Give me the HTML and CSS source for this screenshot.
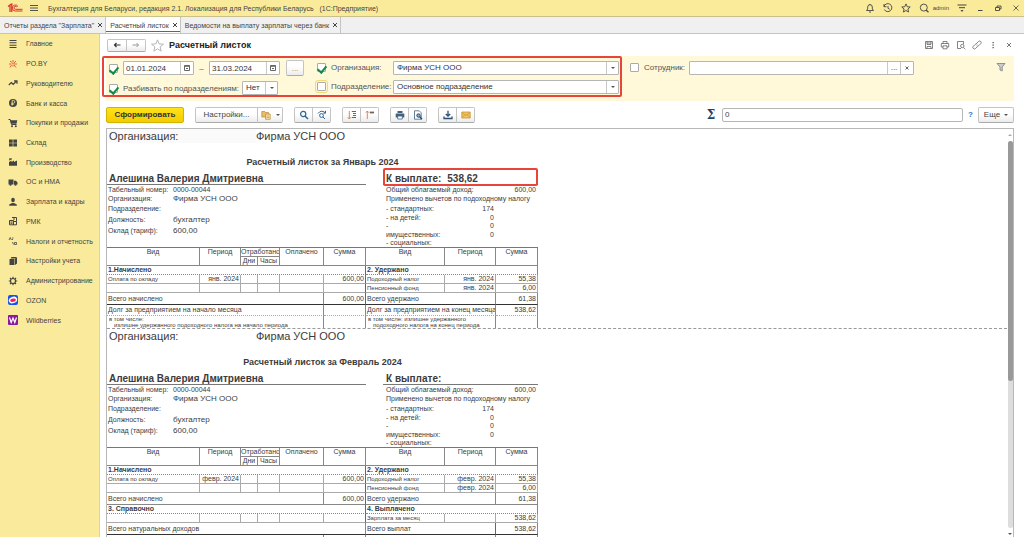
FILE: index.html
```html
<!DOCTYPE html>
<html lang="ru">
<head>
<meta charset="utf-8">
<title>Расчетный листок</title>
<link rel="stylesheet" href="styles.css">
</head>
<body>
<header class="topbar">
  <svg class="logo" viewBox="0 0 16 10" aria-label="1С"><path d="M1 3.500 3 2v7M3.500 1.300 4.800 1v8" fill="none" stroke="#d8352a" stroke-width="1.300"/><path d="M11 3.600A3 3 0 1 0 8.600 8H15.500M9.800 4A1.500 1.500 0 1 0 8.600 6.300H15.500" fill="none" stroke="#d8352a" stroke-width="1"/></svg>
  <button class="plain" aria-label="Меню"><svg class="ic" viewBox="0 0 10 10"><path d="M1 2.500h8M1 5h8M1 7.500h8" stroke="#555" fill="none"/></svg></button>
  <span class="app-title">Бухгалтерия для Беларуси, редакция 2.1. Локализация для Республики Беларусь &nbsp; (1С:Предприятие)</span>
  <div class="top-tools">
    <button class="plain" aria-label="Уведомления"><svg class="ic" viewBox="0 0 10 10"><path d="M1.500 7.500h7L7.300 6V4A2.300 2.300 0 0 0 2.700 4v2zM4 9h2M5 1v1" stroke="#444" fill="none" stroke-width=".9"/></svg></button>
    <button class="plain" aria-label="История"><svg class="ic" viewBox="0 0 10 10"><path d="M1 3.500A4 4 0 1 1 1.300 6.500M1 1v2.700h2.500M5 3v2.300l1.700 1" stroke="#444" fill="none" stroke-width=".9"/></svg></button>
    <button class="plain" aria-label="Избранное"><svg class="ic" viewBox="0 0 10 10"><path d="M5 .9 6.200 3.700l3 .3-2.300 2 .7 3L5 7.500 2.400 9l.7-3L.8 4l3-.3z" stroke="#444" fill="none" stroke-width=".9"/></svg></button>
    <button class="plain" aria-label="Поиск"><svg class="ic" viewBox="0 0 10 10"><circle cx="4.800" cy="4.600" r="3.500" stroke="#444" fill="none" stroke-width=".9"/><path d="M7 7l2.500 2.300" stroke="#444" stroke-width="1.200"/></svg></button>
    <span class="user">admin</span>
    <button class="plain" aria-label="Сервис"><svg class="ic" viewBox="0 0 10 10"><path d="M.5 2h9M2 4.700h6" stroke="#444"/><path d="M3.500 7h3L5 9z" fill="#444"/></svg></button>
    <button class="plain win" aria-label="Свернуть"><svg class="ic" viewBox="0 0 10 10"><path d="M3 7.500h4.500" stroke="#444"/></svg></button>
    <button class="plain win" aria-label="Восстановить"><svg class="ic" viewBox="0 0 10 10"><path d="M2.500 4.500h4v3h-4zM4 4.500V3h4v3H6.500" stroke="#444" fill="none" stroke-width=".9"/></svg></button>
    <button class="plain win" aria-label="Закрыть"><svg class="ic" viewBox="0 0 10 10"><path d="M2.500 2.500l5 5M7.500 2.500l-5 5" stroke="#444" stroke-width=".8"/></svg></button>
  </div>
</header>

<nav class="tabs">
  <div class="tab"><span>Отчеты раздела "Зарплата"</span><button class="plain close" aria-label="Закрыть"><svg viewBox="0 0 6 6"><path d="M1 1l4 4M5 1L1 5" stroke="#444"/></svg></button></div>
  <div class="tab active"><span>Расчетный листок</span><button class="plain close" aria-label="Закрыть"><svg viewBox="0 0 6 6"><path d="M1 1l4 4M5 1L1 5" stroke="#444"/></svg></button></div>
  <div class="tab"><span>Ведомости на выплату зарплаты через банк</span><button class="plain close" aria-label="Закрыть"><svg viewBox="0 0 6 6"><path d="M1 1l4 4M5 1L1 5" stroke="#444"/></svg></button></div>
</nav>

<div class="workspace">
  <aside class="sidebar">
    <a href="#"><svg class="ic" viewBox="0 0 10 10"><path d="M1.500 1.500h7M1.500 3.800h7M1.500 6.200h7M1.500 8.500h7" stroke="#444" stroke-width="1.100"/></svg>Главное</a>
    <a href="#"><svg class="ic" viewBox="0 0 10 10"><path d="M5 1v2.500M1 5h2.500M6 5h3M2 2l2 1.500M8 2L6 4M3.500 6L2 8.500M6 6l2 2.500M5 6v1.500" stroke="#e0502e" stroke-width=".9"/><circle cx="5" cy="4.800" r=".8" fill="#e0502e"/></svg>PO.BY</a>
    <a href="#"><svg class="ic" viewBox="0 0 10 10"><path d="M.8 7l2.500-2.500L5.200 6.300 8.500 3M6 2.800h3v3" stroke="#444" fill="none" stroke-width="1.200"/></svg>Руководителю</a>
    <a href="#"><svg class="ic" viewBox="0 0 10 10"><circle cx="5" cy="5" r="4" fill="#444"/><path d="M4.200 7.500v-5h1.300a1.300 1.300 0 0 1 0 2.700H3.200M3.200 6.400h2.500" stroke="#f9eb9b" fill="none" stroke-width=".8"/></svg>Банк и касса</a>
    <a href="#"><svg class="ic" viewBox="0 0 10 10"><path d="M.5 1.500h1.700l1.300 5h5" stroke="#444" fill="none"/><path d="M2.300 2.300h7L8.500 5.700H3.200z" fill="#444"/><circle cx="4" cy="8.300" r="1" fill="#444"/><circle cx="7.800" cy="8.300" r="1" fill="#444"/></svg>Покупки и продажи</a>
    <a href="#"><svg class="ic" viewBox="0 0 10 10"><path d="M1 1.500h3.700v3.200H1zM5.300 1.500H9v3.200H5.300zM1 5.300h3.700v3.200H1zM5.300 5.300H9v3.200H5.300z" fill="#444"/></svg>Склад</a>
    <a href="#"><svg class="ic" viewBox="0 0 10 10"><path d="M1 8.800V5l2.500-1.500V5L6 3.500V5l3-1.500v5.300zM1 1.500h3v1H1z" fill="#444"/><path d="M1 3.200l2.200-1.500" stroke="#444"/></svg>Производство</a>
    <a href="#"><svg class="ic" viewBox="0 0 10 10"><path d="M.5 2.500h5v5h-5zM6 3.800h2l1.500 1.700v2H6z" fill="#444"/><circle cx="2.500" cy="7.700" r="1.100" fill="#444"/><circle cx="7.500" cy="7.700" r="1.100" fill="#444"/></svg>ОС и НМА</a>
    <a href="#"><svg class="ic" viewBox="0 0 10 10"><ellipse cx="5" cy="3" rx="1.800" ry="2.200" fill="#444"/><path d="M1.200 8.800V7.500L4 6h2l2.800 1.500v1.300z" fill="#444"/></svg>Зарплата и кадры</a>
    <a href="#"><svg class="ic" viewBox="0 0 10 10"><path d="M4 1.500h4.500v4M1.500 4.500h4v4.300h-4zM5.500 5.500h3v3.300h-3z" fill="none" stroke="#444"/><path d="M5 3h2M2.500 6h2M2.500 7.300h2" stroke="#444"/></svg>РМК</a>
    <a href="#"><svg class="ic" viewBox="0 0 10 10"><path d="M1 4l1.200-2.500L3.400 4M4 2h1.500M4 3.500h1M4.500 6l1 2.500M6.500 6.500h2v2h-2z" stroke="#444" fill="none" stroke-width=".8"/></svg>Налоги и отчетность</a>
    <a href="#"><svg class="ic" viewBox="0 0 10 10"><path d="M1.500 3h5v6h-5zM2.500 2.500L3.500 1H9L7.500 2.500zM7 3l2-1.500v6L7 9z" fill="#444"/></svg>Настройки учета</a>
    <a href="#"><svg class="ic" viewBox="0 0 10 10"><circle cx="5" cy="5" r="2.500" fill="none" stroke="#444" stroke-width="1.200"/><path d="M5 .8v1.500M5 7.700v1.500M.8 5h1.500M7.700 5h1.500M2 2l1 1M7 7l1 1M8 2L7 3M3 7L2 8" stroke="#444" stroke-width="1.200"/></svg>Администрирование</a>
    <a href="#"><svg class="ic" viewBox="0 0 10 10"><rect width="10" height="10" rx="2" fill="#1552f0"/><ellipse cx="5" cy="5" rx="4.300" ry="3.300" fill="#fff" transform="rotate(-20 5 5)"/><ellipse cx="5" cy="5.200" rx="2.900" ry="1.700" fill="#f0245a" transform="rotate(-10 5 5)"/></svg>OZON</a>
    <a href="#"><svg class="ic" viewBox="0 0 10 10"><rect width="10" height="10" rx="1" fill="#8a1a9c"/><path d="M1.500 2.500l1.700 5L5 3l1.800 4.500 1.700-5" stroke="#fff" fill="none" stroke-width="1.200"/></svg>Wildberries</a>
  </aside>

  <main class="page">
    <div class="page-head">
      <div class="btn-group nav-group">
        <button class="btn" aria-label="Назад"><svg class="ic" viewBox="0 0 10 10"><path d="M8.500 5h-6M4.500 3L2.500 5l2 2" stroke="#333" fill="none" stroke-width="1.200"/></svg></button>
        <button class="btn" aria-label="Вперед"><svg class="ic" viewBox="0 0 10 10"><path d="M1.500 5h6M5.500 3l2 2-2 2" stroke="#999" fill="none"/></svg></button>
      </div>
      <button class="plain" aria-label="В избранное"><svg class="star" viewBox="0 0 12 12"><path d="M6 .8 7.500 4.500l4 .3-3.100 2.500 1 3.900L6 9.100l-3.400 2.100 1-3.900L.5 4.800l4-.3z" fill="none" stroke="#aaa" stroke-width=".8"/></svg></button>
      <h1>Расчетный листок</h1>
      <div class="head-tools">
        <button class="plain" aria-label="Сохранить"><svg class="ic" viewBox="0 0 10 10"><path d="M1.500 1.500h7v7h-7zM3 1.500v3h4v-3M3 8.500v-2h4v2M3 3h4" fill="none" stroke="#666" stroke-width=".8"/></svg></button>
        <button class="plain" aria-label="Печать"><svg class="ic" viewBox="0 0 10 10"><path d="M3 3.500v-2h4v2M3 7H1.300V3.500h7.400V7H7M3 5.800h4v3H3z" fill="none" stroke="#666" stroke-width=".8"/></svg></button>
        <button class="plain" aria-label="Просмотр"><svg class="ic" viewBox="0 0 10 10"><path d="M5 8.500H1.500v-7h6V4M7.500 7.500l1.800 1.700" fill="none" stroke="#666" stroke-width=".8"/><circle cx="6.300" cy="6" r="1.700" fill="none" stroke="#666" stroke-width=".8"/></svg></button>
        <button class="plain" aria-label="Ссылка"><svg class="ic" viewBox="0 0 10 10"><path d="M4.500 3.500l2-2a1.500 1.500 0 0 1 2.200 2.200l-2 2a1.300 1.300 0 0 1-2 0M5.500 6.500l-2 2a1.500 1.500 0 0 1-2.200-2.200l2-2a1.300 1.300 0 0 1 2 0" fill="none" stroke="#666" stroke-width=".8"/></svg></button>
        <button class="plain" aria-label="Еще"><svg class="ic" viewBox="0 0 10 10"><path d="M4.500 2h1.300v1.300H4.500zM4.500 4.500h1.300v1.300H4.500zM4.500 7h1.300v1.300H4.500z" fill="#555"/></svg></button>
        <button class="plain" aria-label="Закрыть"><svg class="ic" viewBox="0 0 10 10"><path d="M3 3l4 4M7 3L3 7" stroke="#666" stroke-width=".9"/></svg></button>
      </div>
    </div>

    <form class="filter">
      <div class="filter-left">
        <div class="frow">
          <input type="checkbox" class="cb" id="period" aria-label="Период" checked>
          <div class="field date"><input type="text" value="01.01.2024" aria-label="Начало периода"><button type="button" aria-label="Календарь"><svg viewBox="0 0 8 8"><path d="M1.500 1.500h5v5h-5z" fill="none" stroke="#666"/><path d="M1 2.300h6M3 4.500h2" stroke="#666"/></svg></button></div>
          <span class="dash">–</span>
          <div class="field date"><input type="text" value="31.03.2024" aria-label="Конец периода"><button type="button" aria-label="Календарь"><svg viewBox="0 0 8 8"><path d="M1.500 1.500h5v5h-5z" fill="none" stroke="#666"/><path d="M1 2.300h6M3 4.500h2" stroke="#666"/></svg></button></div>
          <button type="button" class="btn dots">...</button>
        </div>
        <div class="frow">
          <input type="checkbox" class="cb" id="split" aria-label="Использовать разбивку" checked>
          <label for="split-by">Разбивать по подразделениям:</label>
          <div class="pick short"><select id="split-by"><option>Нет</option></select></div>
        </div>
      </div>
      <div class="filter-mid">
        <div class="frow">
          <input type="checkbox" class="cb" aria-label="Отбор по организации" checked>
          <label for="org">Организация:</label>
          <div class="pick"><select id="org"><option>Фирма УСН ООО</option></select></div>
        </div>
        <div class="frow">
          <input type="checkbox" class="cb focus" aria-label="Отбор по подразделению">
          <label for="dep">Подразделение:</label>
          <div class="pick"><select id="dep"><option>Основное подразделение</option></select></div>
        </div>
      </div>
      <div class="filter-right">
        <div class="frow">
          <input type="checkbox" class="cb" aria-label="Отбор по сотруднику">
          <label for="emp">Сотрудник:</label>
          <div class="field emp"><input type="text" id="emp"><button type="button">...</button><button type="button" aria-label="Очистить"><svg viewBox="0 0 8 8"><path d="M2.500 2.500l3 3M5.500 2.500l-3 3" stroke="#666"/></svg></button></div>
        </div>
      </div>
      <button type="button" class="plain funnel" aria-label="Отборы"><svg class="ic" viewBox="0 0 10 10"><path d="M1 1.500h8L6.200 5v4L4 8V5z" fill="#ccc" stroke="#888" stroke-width=".9"/></svg></button>
      <div class="mark mark-filter"></div>
    </form>

    <div class="toolbar">
      <button class="btn primary">Сформировать</button>
      <div class="btn-group">
        <button class="btn settings">Настройки...</button>
        <button class="btn variant" aria-label="Варианты"><svg class="ic" viewBox="0 0 10 10"><path d="M.8 1.500h3l.7 1h3V7H.8z" fill="#e9bd6a" stroke="#b98a35" stroke-width=".7"/><path d="M4.500 4h4.700v5.300H4.500z" fill="#f8e3b0" stroke="#b98a35" stroke-width=".7"/><path d="M5.500 6h2.700M5.500 7.500h2.700" stroke="#b98a35" stroke-width=".6"/></svg><i class="caret"></i></button>
      </div>
      <div class="btn-group">
        <button class="btn" aria-label="Найти"><svg class="ic" viewBox="0 0 10 10"><circle cx="4.200" cy="4" r="2.600" fill="none" stroke="#2f6695" stroke-width="1.200"/><path d="M6 6l3 3" stroke="#2f6695" stroke-width="1.500"/></svg></button>
        <button class="btn" aria-label="Найти далее"><svg class="ic" viewBox="0 0 10 10"><circle cx="4.500" cy="5.500" r="1.900" fill="none" stroke="#2f6695"/><path d="M6 7l2 2M1 3.500Q4-.5 8 2.500M8.500.8v2.400H6.300" fill="none" stroke="#2f6695"/></svg></button>
      </div>
      <div class="btn-group">
        <button class="btn" aria-label="Развернуть"><svg class="ic" viewBox="0 0 10 10"><path d="M2.300 1v8M.8 7.300L2.300 9l1.500-1.700" fill="none" stroke="#e07848" stroke-width=".9"/><path d="M4.800 1.500H9M6 3.500h3M6 5.500h3M4.800 7.500H9" stroke="#666"/></svg></button>
        <button class="btn" aria-label="Свернуть"><svg class="ic" viewBox="0 0 10 10"><path d="M2.300 9V1M.8 2.700L2.300 1l1.500 1.700" fill="none" stroke="#e07848" stroke-width=".9"/><path d="M4.800 2.500H9" stroke="#666" stroke-width="1.800"/></svg></button>
      </div>
      <div class="btn-group">
        <button class="btn" aria-label="Печать"><svg class="ic" viewBox="0 0 10 10"><path d="M2.500 1h5v2h-5zM.7 3.500h8.600v4H.7z" fill="#45617c"/><path d="M2.700 6h4.600v3H2.700z" fill="#fff" stroke="#45617c" stroke-width=".8"/></svg></button>
        <button class="btn" aria-label="Предварительный просмотр"><svg class="ic" viewBox="0 0 10 10"><path d="M1.500.8h4.700l2 2v6.400H1.500z" fill="#fff" stroke="#45617c" stroke-width=".8"/><circle cx="5.500" cy="5.500" r="1.700" fill="#8db2d2" stroke="#234a70"/><path d="M6.700 6.700l2.300 2.500" stroke="#234a70" stroke-width="1.300"/></svg></button>
      </div>
      <div class="btn-group">
        <button class="btn" aria-label="Сохранить"><svg class="ic" viewBox="0 0 10 10"><path d="M5 .8v5M2.800 4L5 6.200 7.200 4M1 6.500v2h8v-2" fill="none" stroke="#2c4f73" stroke-width="1.300"/></svg></button>
        <button class="btn" aria-label="Отправить"><svg class="ic" viewBox="0 0 10 10"><path d="M.8 2h8.400v6H.8z" fill="#f2c35c" stroke="#c8953a" stroke-width=".8"/><path d="M1 2.500l4 3 4-3M1 7.500l2.800-2.800M9 7.500L6.200 4.700" fill="none" stroke="#c8953a" stroke-width=".7"/></svg></button>
      </div>
      <label class="sigma" for="sum">Σ</label>
      <input type="text" class="sum" id="sum" value="0">
      <a href="#" class="help">?</a>
      <button class="btn more">Еще<i class="caret"></i></button>
    </div>

    <div class="sheet">
      <div class="doc">
        <section class="slip">
          <div class="org"><span class="org-label">Организация:</span><span>Фирма УСН ООО</span></div>
          <h2>Расчетный листок за Январь 2024</h2>
          <div class="info">
            <div class="person">
              <h3>Алешина Валерия Дмитриевна</h3>
              <dl>
                <dt>Табельный номер:</dt><dd class="code">0000-00044</dd>
                <dt>Организация:</dt><dd>Фирма УСН ООО</dd>
                <dt>Подразделение:</dt><dd></dd>
                <dt>Должность:</dt><dd>бухгалтер</dd>
                <dt>Оклад (тариф):</dt><dd>600,00</dd>
              </dl>
            </div>
            <div class="payout">
              <h3><span>К выплате:</span><span>538,62</span></h3>
              <div class="mark mark-pay"></div>
              <div class="pl wide"><span>Общий облагаемый доход:</span><span>600,00</span></div>
              <div class="pl">Применено вычетов по подоходному налогу</div>
              <div class="pl first"><span>- стандартных:</span><span>174</span></div>
              <div class="pl"><span>- на детей:</span><span>0</span></div>
              <div class="pl tight"><span>-</span><span>0</span></div>
              <div class="pl"><span>имущественных:</span><span>0</span></div>
              <div class="pl tight"><span>- социальных:</span></div>
            </div>
          </div>
          <table>
            <colgroup><col class="c-name"><col class="c-per"><col class="c-day"><col class="c-hr"><col class="c-paid"><col class="c-sum"><col class="c-name2"><col class="c-per2"><col class="c-sum"></colgroup>
            <thead>
              <tr><th rowspan="2">Вид</th><th rowspan="2">Период</th><th colspan="2">Отработано</th><th rowspan="2">Оплачено</th><th rowspan="2">Сумма</th><th rowspan="2">Вид</th><th rowspan="2">Период</th><th rowspan="2">Сумма</th></tr>
              <tr><th>Дни</th><th>Часы</th></tr>
            </thead>
            <tbody>
              <tr class="sec"><td colspan="6">1.Начислено</td><td colspan="3">2. Удержано</td></tr>
              <tr class="row"><td class="s">Оплата по окладу</td><td class="n">янв. 2024</td><td></td><td></td><td></td><td class="n">600,00</td><td class="s">Подоходный налог</td><td class="n">янв. 2024</td><td class="n">55,38</td></tr>
              <tr class="row"><td></td><td></td><td></td><td></td><td></td><td></td><td class="s">Пенсионный фонд</td><td class="n">янв. 2024</td><td class="n">6,00</td></tr>
              <tr class="total thick"><td colspan="5">Всего начислено</td><td class="n">600,00</td><td colspan="2">Всего удержано</td><td class="n">61,38</td></tr>
              <tr class="debt"><td colspan="5">Долг за предприятием на начало месяца</td><td></td><td colspan="2">Долг за предприятием на конец месяца</td><td class="n">538,62</td></tr>
              <tr class="note"><td colspan="5">в том числе:<br>&nbsp;&nbsp; излишне удержанного подоходного налога на начало периода</td><td></td><td colspan="2">в том числе: излишне удержанного<br>&nbsp;&nbsp; подоходного налога на конец периода</td><td></td></tr>
            </tbody>
          </table>
        </section>
        <section class="slip last">
          <div class="org"><span class="org-label clear">Организация:</span><span>Фирма УСН ООО</span></div>
          <h2>Расчетный листок за Февраль 2024</h2>
          <div class="info">
            <div class="person">
              <h3>Алешина Валерия Дмитриевна</h3>
              <dl>
                <dt>Табельный номер:</dt><dd class="code">0000-00044</dd>
                <dt>Организация:</dt><dd>Фирма УСН ООО</dd>
                <dt>Подразделение:</dt><dd></dd>
                <dt>Должность:</dt><dd>бухгалтер</dd>
                <dt>Оклад (тариф):</dt><dd>600,00</dd>
              </dl>
            </div>
            <div class="payout">
              <h3><span>К выплате:</span></h3>
              <div class="pl wide"><span>Общий облагаемый доход:</span><span>600,00</span></div>
              <div class="pl">Применено вычетов по подоходному налогу</div>
              <div class="pl first"><span>- стандартных:</span><span>174</span></div>
              <div class="pl"><span>- на детей:</span><span>0</span></div>
              <div class="pl tight"><span>-</span><span>0</span></div>
              <div class="pl"><span>имущественных:</span><span>0</span></div>
              <div class="pl tight"><span>- социальных:</span></div>
            </div>
          </div>
          <table>
            <colgroup><col class="c-name"><col class="c-per"><col class="c-day"><col class="c-hr"><col class="c-paid"><col class="c-sum"><col class="c-name2"><col class="c-per2"><col class="c-sum"></colgroup>
            <thead>
              <tr><th rowspan="2">Вид</th><th rowspan="2">Период</th><th colspan="2">Отработано</th><th rowspan="2">Оплачено</th><th rowspan="2">Сумма</th><th rowspan="2">Вид</th><th rowspan="2">Период</th><th rowspan="2">Сумма</th></tr>
              <tr><th>Дни</th><th>Часы</th></tr>
            </thead>
            <tbody>
              <tr class="sec"><td colspan="6">1.Начислено</td><td colspan="3">2. Удержано</td></tr>
              <tr class="row"><td class="s">Оплата по окладу</td><td class="n">февр. 2024</td><td></td><td></td><td></td><td class="n">600,00</td><td class="s">Подоходный налог</td><td class="n">февр. 2024</td><td class="n">55,38</td></tr>
              <tr class="row"><td></td><td></td><td></td><td></td><td></td><td></td><td class="s">Пенсионный фонд</td><td class="n">февр. 2024</td><td class="n">6,00</td></tr>
              <tr class="total"><td colspan="5">Всего начислено</td><td class="n">600,00</td><td colspan="2">Всего удержано</td><td class="n">61,38</td></tr>
              <tr class="sec"><td colspan="6">3. Справочно</td><td colspan="3">4. Выплачено</td></tr>
              <tr class="row"><td></td><td></td><td></td><td></td><td></td><td></td><td class="s">Зарплата за месяц</td><td></td><td class="n">538,62</td></tr>
              <tr class="total thick"><td colspan="6">Всего натуральных доходов</td><td colspan="2">Всего выплат</td><td class="n">538,62</td></tr>
              <tr class="debt"><td colspan="5">Долг за предприятием на начало месяца</td><td class="n">538,62</td><td colspan="2">Долг за предприятием на конец месяца</td><td class="n">538,62</td></tr>
            </tbody>
          </table>
        </section>
      </div>
      <div class="scroll"><i class="up"></i><div class="track"><div class="thumb"></div></div><i class="down"></i></div>
    </div>
  </main>
</div>
</body>
</html>
```

FILE: styles.css
```css
* { box-sizing: border-box; }
body {
  margin: 0;
  height: 100vh;
  display: flex;
  flex-direction: column;
  overflow: hidden;
  background: #fff;
  color: #444;
  font: 7px/9px "Liberation Sans", Arial, sans-serif;
}
button, input, select { font: inherit; color: inherit; margin: 0; padding: 0; min-width: 0; }
button { border: 0; background: none; }
a { color: inherit; text-decoration: none; }
h1, h2, h3, dl, dd { margin: 0; }
svg { display: block; }
.ic { width: 10px; height: 10px; flex: none; }
.plain { display: flex; align-items: center; justify-content: center; }

.topbar {
  display: flex;
  align-items: center;
  height: 17px;
  flex: none;
  padding: 0 3px 0 7px;
  background: #faeb9a;
  border-bottom: 1px solid #c9c08d;
}
.logo { width: 16px; height: 10px; margin-right: 6px; }
.app-title { margin-left: 9px; white-space: nowrap; }
.top-tools { display: flex; align-items: center; gap: 8px; margin-left: auto; }
.user { font-size: 6px; margin-left: -4px; }

.tabs { display: flex; height: 17px; flex: none; background: #f0f0f0; border-bottom: 1px solid #c4c4c4; }
.tab { display: flex; align-items: center; gap: 3px; padding: 0 2px 0 4px; border-right: 1px solid #c4c4c4; }
.tab.active { background: #fff; box-shadow: inset 0 -1px #fff, inset 0 -2px #14934f; }
.close svg { width: 6px; height: 6px; }

.workspace { display: flex; flex: 1; min-height: 0; }
.sidebar {
  width: 100px;
  flex: none;
  display: grid;
  grid-template-rows: repeat(15, minmax(0, 296fr)) minmax(0, 3105fr);
  background: #f9eb9b;
  border-right: 1px solid #ddd3a0;
}
.sidebar a { display: flex; align-items: center; gap: 8px; padding-left: 8px; white-space: nowrap; }

.page { flex: 1; min-width: 0; display: flex; flex-direction: column; padding: 0 10px 0 6px; }
.page-head { display: flex; align-items: center; height: 22px; flex: none; gap: 5px; }
h1 { font-size: 9px; line-height: 12px; color: #222; }
.star { width: 13px; height: 13px; }
.head-tools { display: flex; gap: 6px; margin-left: auto; }

.btn {
  height: 16px;
  border: 1px solid #c4c4c4;
  border-bottom-color: #aaa;
  border-radius: 2px;
  background: linear-gradient(#fff 40%, #ececec);
  display: flex;
  align-items: center;
  justify-content: center;
  font-size: 8px;
}
.btn-group { display: flex; }
.btn-group .btn { width: 19px; }
.btn-group .btn + .btn { margin-left: -1px; border-radius: 0 2px 2px 0; }
.btn-group .btn:first-child { border-radius: 2px 0 0 2px; }
.nav-group .btn { width: 20px; height: 13px; }
.nav-group { margin-left: 1px; }

.filter {
  position: relative;
  display: flex;
  height: 45px;
  flex: none;
  padding: 2px 8px 0 3px;
  background: #fff8d9;
  color: #555;
  font-size: 8px;
}
.frow { display: flex; align-items: center; height: 20px; white-space: nowrap; }
.filter-left { width: 208px; }
.filter-mid .frow { height: 19px; }
.filter-mid label { width: 62px; }
.filter-right { margin-left: 11px; }
.filter-right label { width: 45px; }
.filter-right .frow { height: 19px; }
.cb {
  appearance: none;
  flex: none;
  width: 9px;
  height: 9px;
  margin-right: 5px;
  border: 1px solid #aaa;
  border-radius: 1px;
  background: #fff;
  display: grid;
  place-items: center;
}
.cb:checked::after {
  content: "";
  width: 4px;
  height: 7px;
  margin-bottom: 3px;
  border: solid #128a4a;
  border-width: 0 2px 2px 0;
  transform: rotate(40deg);
}
.cb.focus { outline: 1px solid #f3d873; outline-offset: 1px; }
.field { display: flex; height: 14px; border: 1px solid #b5b5b5; border-radius: 1px; background: #fff; color: #333; }
.field input { flex: 1; border: 0; background: none; padding-left: 2px; }
.field button { width: 13px; border-left: 1px solid #c8c8c8; display: grid; place-items: center; }
.field svg { width: 8px; height: 8px; }
.date { width: 71px; }
.dash { width: 15px; text-align: center; }
.dots { width: 18px; margin-left: 6px; color: #888; }
.emp { width: 225px; }
.pick { position: relative; width: 226px; height: 14px; border: 1px solid #b5b5b5; border-radius: 1px; background: #fff; color: #333; }
.pick select { appearance: none; display: block; width: 100%; height: 100%; border: 0; background: none; padding: 0 12px 0 3px; line-height: 10px; }
.pick::before { content: ""; position: absolute; right: 11px; top: 0; bottom: 0; border-left: 1px solid #c8c8c8; }
.pick::after, .caret { border: solid transparent; border-width: 2px 2px 0; border-top-color: #555; }
.pick::after { content: ""; position: absolute; right: 3px; top: 5px; }
.short { width: 36px; margin-left: 3px; }
.funnel { margin: 4px 0 0 auto; height: 10px; }
.mark { position: absolute; border: 2px solid #e8453a; border-radius: 2px; pointer-events: none; }
.mark-filter { left: -4px; top: 0; width: 520px; height: 41px; }

.toolbar { display: flex; align-items: center; height: 27px; flex: none; gap: 11px; }
.primary { width: 78px; background: linear-gradient(#ffe21a, #f2cc00); border-color: #d5b400; font-weight: bold; color: #333; }
.btn-group .settings { width: 63px; }
.btn-group .variant { width: 26px; gap: 5px; }
.toolbar .sigma { margin-left: auto; font: bold 12px/14px "DejaVu Serif", serif; color: #2c3f58; }
.sum { width: 241px; height: 14px; border: 1px solid #b5b5b5; border-radius: 2px; padding-left: 2px; font-size: 8px; margin-left: -4px; }
.help { color: #2a72b8; font-weight: bold; font-size: 8px; margin: 0 -6px; }
.more { width: 36px; gap: 4px; }

.sheet { flex: 1; min-height: 0; display: flex; border: solid #b8b8b8; border-width: 1px 1px 0; overflow: hidden; color: #3c3c3c; }
.doc { flex: 1; overflow: hidden; }
.slip { height: 200px; border-bottom: 1px dashed #999; }
.last { height: auto; border-bottom: 0; }
.org { display: flex; height: 15px; align-items: flex-start; font-size: 11px; line-height: 14px; }
.org-label { width: 149px; padding-left: 2px; background: #fafafa; }
.clear { background: none; }
h2 { width: 431px; height: 26px; padding-top: 13px; text-align: center; font-size: 9px; line-height: 10px; }
.info { display: flex; gap: 17px; }
.person { width: 259px; }
.payout { position: relative; width: 155px; }
h3 { height: 15px; padding: 3px 2px 0; border-bottom: 1px solid #777; font-size: 10px; line-height: 11px; white-space: nowrap; }
.payout h3 { display: flex; gap: 6px; padding-left: 3px; }
.mark-pay { left: 0; top: -2px; width: 155px; height: 18px; }
dl { display: grid; grid-template-columns: 66px 1fr; grid-template-rows: 9px 9px 11px 11px 11px; align-items: center; font-size: 7px; line-height: 8px; }
dt { padding-left: 1px; white-space: nowrap; }
dd { font-size: 8px; padding-top: 1px; }
.code { font-size: 7px; padding-top: 0; }
.pl { display: flex; justify-content: space-between; height: 9px; padding: 0 44px 0 3px; white-space: nowrap; }
.wide { padding-right: 2px; }
.first { height: 10px; align-items: flex-end; }
.tight { height: 8px; line-height: 8px; }

table { width: 431px; table-layout: fixed; border-spacing: 0; border-top: 1px solid #777; line-height: 8px; }
.c-name { width: 93px; } .c-per { width: 41px; } .c-day { width: 17px; } .c-hr { width: 22px; }
.c-paid { width: 44px; } .c-sum { width: 42px; } .c-name2 { width: 79px; } .c-per2 { width: 51px; }
th, td { padding: 0 1px; border: solid #888; border-width: 0 1px 1px 0; white-space: nowrap; overflow: hidden; text-align: left; vertical-align: middle; height: 9px; }
th { font-weight: normal; text-align: center; vertical-align: top; padding: 0; }
.sec td { font-weight: bold; border-bottom-style: dotted; }
.row td { border-color: #aaa; }
.sec td:first-child, .row td:nth-child(6), .total td:nth-child(2) { border-right-color: #666; }
td.n { text-align: right; padding-right: 1px; }
td.s { font-size: 6px; }
.total td { height: 12px; }
.thick td { border-bottom: 1px solid #333; }
.debt td { height: 11px; border-bottom: 1px dotted #aaa; }
.note td { height: 12px; font-size: 6px; line-height: 6px; padding-left: 2px; border-bottom: 0; }

.scroll { width: 6px; flex: none; display: flex; flex-direction: column; align-items: center; padding: 5px 0 2px; gap: 5px; }
.track { flex: 1; width: 5px; border-radius: 3px; background: #ddd; }
.thumb { height: 62%; border-radius: 3px; background: #999; }
.up { border: solid transparent; border-width: 0 2px 2px; border-bottom-color: #aaa; }
.down { border: solid transparent; border-width: 2px 2px 0; border-top-color: #555; }
```
